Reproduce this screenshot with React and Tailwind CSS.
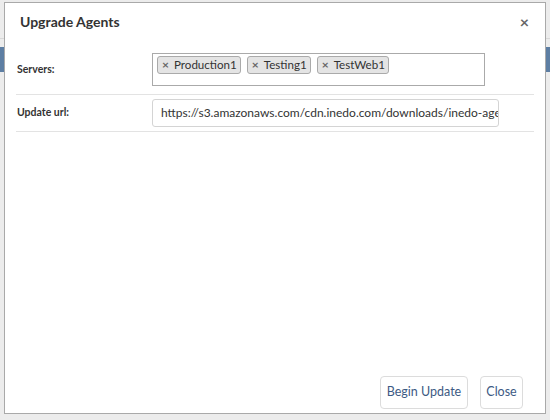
const servers = ['Production1', 'Testing1', 'TestWeb1'];

function Tag({ name }) {
  return (
    <span className="flex h-[18px] items-center gap-[5px] rounded-[3px] border border-[#aaaaaa] bg-[#e4e4e4] pl-[4px] pr-[3px] text-[11.6px] text-[#333]">
      <span className="text-[12px] font-bold leading-none text-[#666]">×</span>
      {name}
    </span>
  );
}

export default function App() {
  return (
    <div
      className="relative h-[420px] w-[550px] overflow-hidden bg-[#ececec]"
      style={{ fontFamily: 'Lato, "Open Sans", sans-serif' }}
    >
      {/* page behind the dialog */}
      <div className="absolute left-0 top-[47px] h-[25px] w-full bg-[#5d7ea3]" />
      <div className="absolute left-0 top-[38px] h-px w-full bg-[#d8d8d8]" />

      <div className="absolute left-[4px] top-[2px] flex h-[412px] w-[542px] flex-col border border-[#a9a9a9] bg-white">
        <div className="flex items-center justify-between pl-[15px] pr-[16px] pt-[8px]">
          <h1 className="text-[14px] font-bold text-[#333]">Upgrade Agents</h1>
          <span className="text-[16px] font-bold leading-none text-[#666]">×</span>
        </div>

        <div className="mx-[11px] mt-[21px]">
          <div className="flex items-center border-b border-[#e3e3e3] pb-[8px]">
            <label className="w-[136px] pl-[1px] text-[10.5px] font-bold text-[#333]">Servers:</label>
            <div className="flex h-[33px] w-[333px] items-start gap-[6px] border border-[#aaaaaa] px-[4px] pt-[2px]">
              {servers.map((s) => (
                <Tag key={s} name={s} />
              ))}
            </div>
          </div>
          <div className="flex items-center border-b border-[#e3e3e3] py-[4px]">
            <label className="w-[136px] pl-[1px] text-[10.5px] font-bold text-[#333]">Update url:</label>
            <div className="flex h-[28px] w-[347px] items-center overflow-hidden whitespace-nowrap rounded-[3px] border border-[#d4d4d4] pl-[8px] text-[12px] text-[#333]">
              https://s3.amazonaws.com/cdn.inedo.com/downloads/inedo-age
            </div>
          </div>
        </div>

        <div className="mt-auto flex justify-end gap-[12px] pb-[4px] pr-[22px]">
          <button className="h-[33px] w-[88px] rounded-[4px] border border-[#dcdcdc] bg-white text-[12.5px] text-[#3d5a84]">
            Begin Update
          </button>
          <button className="h-[33px] w-[43px] rounded-[4px] border border-[#dcdcdc] bg-white text-[12.5px] text-[#3d5a84]">
            Close
          </button>
        </div>
      </div>
    </div>
  );
}
